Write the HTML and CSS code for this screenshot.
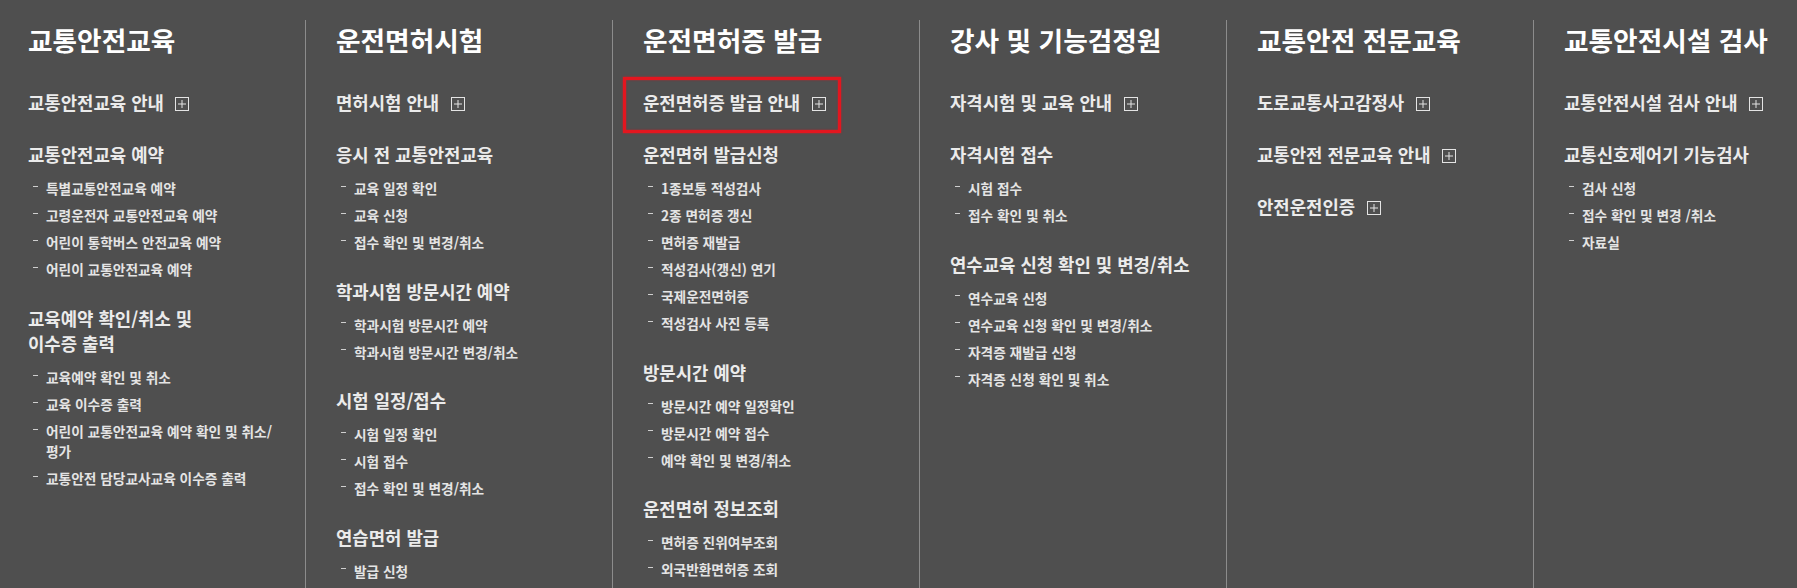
FILE: index.html
```html
<!DOCTYPE html>
<html lang="ko">
<head>
<meta charset="utf-8">
<title>사이트맵</title>
<link rel="stylesheet" href="styles.css">
</head>
<body>
<nav class="menu">
  <section class="col col-first">
    <h2 class="title">교통안전교육</h2>
    <div class="group"><h3 class="head">교통안전교육 안내<svg class="plus" viewBox="0 0 14 14" width="14" height="14"><rect x="0.5" y="0.5" width="13" height="13"/><path d="M3 7H11M7 3V11"/></svg></h3></div>
    <div class="group"><h3 class="head">교통안전교육 예약</h3>
      <ul class="items">
        <li>특별교통안전교육 예약</li>
        <li>고령운전자 교통안전교육 예약</li>
        <li>어린이 통학버스 안전교육 예약</li>
        <li>어린이 교통안전교육 예약</li>
      </ul>
    </div>
    <div class="group"><h3 class="head">교육예약 확인/취소 및<br>이수증 출력</h3>
      <ul class="items">
        <li>교육예약 확인 및 취소</li>
        <li>교육 이수증 출력</li>
        <li>어린이 교통안전교육 예약 확인 및 취소/<br>평가</li>
        <li>교통안전 담당교사교육 이수증 출력</li>
      </ul>
    </div>
  </section>
  <section class="col">
    <h2 class="title">운전면허시험</h2>
    <div class="group"><h3 class="head">면허시험 안내<svg class="plus" viewBox="0 0 14 14" width="14" height="14"><rect x="0.5" y="0.5" width="13" height="13"/><path d="M3 7H11M7 3V11"/></svg></h3></div>
    <div class="group"><h3 class="head">응시 전 교통안전교육</h3>
      <ul class="items">
        <li>교육 일정 확인</li>
        <li>교육 신청</li>
        <li>접수 확인 및 변경/취소</li>
      </ul>
    </div>
    <div class="group"><h3 class="head">학과시험 방문시간 예약</h3>
      <ul class="items">
        <li>학과시험 방문시간 예약</li>
        <li>학과시험 방문시간 변경/취소</li>
      </ul>
    </div>
    <div class="group"><h3 class="head">시험 일정/접수</h3>
      <ul class="items">
        <li>시험 일정 확인</li>
        <li>시험 접수</li>
        <li>접수 확인 및 변경/취소</li>
      </ul>
    </div>
    <div class="group"><h3 class="head">연습면허 발급</h3>
      <ul class="items">
        <li>발급 신청</li>
      </ul>
    </div>
  </section>
  <section class="col">
    <h2 class="title">운전면허증 발급</h2>
    <div class="group"><h3 class="head marked">운전면허증 발급 안내<svg class="plus" viewBox="0 0 14 14" width="14" height="14"><rect x="0.5" y="0.5" width="13" height="13"/><path d="M3 7H11M7 3V11"/></svg><span class="highlight"></span></h3></div>
    <div class="group"><h3 class="head">운전면허 발급신청</h3>
      <ul class="items">
        <li>1종보통 적성검사</li>
        <li>2종 면허증 갱신</li>
        <li>면허증 재발급</li>
        <li>적성검사(갱신) 연기</li>
        <li>국제운전면허증</li>
        <li>적성검사 사진 등록</li>
      </ul>
    </div>
    <div class="group"><h3 class="head">방문시간 예약</h3>
      <ul class="items">
        <li>방문시간 예약 일정확인</li>
        <li>방문시간 예약 접수</li>
        <li>예약 확인 및 변경/취소</li>
      </ul>
    </div>
    <div class="group"><h3 class="head">운전면허 정보조회</h3>
      <ul class="items">
        <li>면허증 진위여부조회</li>
        <li>외국반환면허증 조회</li>
      </ul>
    </div>
  </section>
  <section class="col">
    <h2 class="title">강사 및 기능검정원</h2>
    <div class="group"><h3 class="head">자격시험 및 교육 안내<svg class="plus" viewBox="0 0 14 14" width="14" height="14"><rect x="0.5" y="0.5" width="13" height="13"/><path d="M3 7H11M7 3V11"/></svg></h3></div>
    <div class="group"><h3 class="head">자격시험 접수</h3>
      <ul class="items">
        <li>시험 접수</li>
        <li>접수 확인 및 취소</li>
      </ul>
    </div>
    <div class="group"><h3 class="head">연수교육 신청 확인 및 변경/취소</h3>
      <ul class="items">
        <li>연수교육 신청</li>
        <li>연수교육 신청 확인 및 변경/취소</li>
        <li>자격증 재발급 신청</li>
        <li>자격증 신청 확인 및 취소</li>
      </ul>
    </div>
  </section>
  <section class="col">
    <h2 class="title">교통안전 전문교육</h2>
    <div class="group"><h3 class="head">도로교통사고감정사<svg class="plus" viewBox="0 0 14 14" width="14" height="14"><rect x="0.5" y="0.5" width="13" height="13"/><path d="M3 7H11M7 3V11"/></svg></h3></div>
    <div class="group"><h3 class="head">교통안전 전문교육 안내<svg class="plus" viewBox="0 0 14 14" width="14" height="14"><rect x="0.5" y="0.5" width="13" height="13"/><path d="M3 7H11M7 3V11"/></svg></h3></div>
    <div class="group"><h3 class="head">안전운전인증<svg class="plus" viewBox="0 0 14 14" width="14" height="14"><rect x="0.5" y="0.5" width="13" height="13"/><path d="M3 7H11M7 3V11"/></svg></h3></div>
  </section>
  <section class="col">
    <h2 class="title">교통안전시설 검사</h2>
    <div class="group"><h3 class="head">교통안전시설 검사 안내<svg class="plus" viewBox="0 0 14 14" width="14" height="14"><rect x="0.5" y="0.5" width="13" height="13"/><path d="M3 7H11M7 3V11"/></svg></h3></div>
    <div class="group"><h3 class="head">교통신호제어기 기능검사</h3>
      <ul class="items">
        <li>검사 신청</li>
        <li>접수 확인 및 변경 /취소</li>
        <li>자료실</li>
      </ul>
    </div>
  </section>
</nav>
</body>
</html>
```
FILE: styles.css
```css
html, body {
  margin: 0;
  padding: 0;
  height: 100%;
  overflow: hidden;
  background: #4f4f4f;
}

body {
  font-family: "Noto Sans CJK KR", "Noto Sans", sans-serif;
  color: #e8e8e8;
}

.menu {
  display: flex;
  height: 100vh;
  padding-top: 20px;
  box-sizing: border-box;
}

.col {
  flex: 0 0 307px;
  box-sizing: border-box;
  border-left: 1px solid #8c8c8c;
  padding: 2px 20px 0 30px;
}

.col-first {
  flex-basis: 305px;
  border-left: none;
  padding-left: 28px;
}

.title {
  margin: 0;
  font-size: 26.7px;
  line-height: 35px;
  font-weight: 700;
  color: #ffffff;
  white-space: nowrap;
}

.group {
  margin-top: 26.5px;
}

.title + .group {
  margin-top: 33px;
}

.head {
  position: relative;
  margin: 0;
  font-size: 17.8px;
  line-height: 25.5px;
  font-weight: 700;
  color: #ebebeb;
  white-space: nowrap;
}

.plus {
  display: inline-block;
  vertical-align: -1px;
  margin-left: 11.5px;
  fill: none;
  stroke: #e4e4e4;
  stroke-width: 1;
}

.items {
  list-style: none;
  display: flex;
  flex-direction: column;
  gap: 7px;
  margin: 10.5px 0 0;
  padding: 0 0 0 5px;
}

.items li {
  display: flex;
  font-size: 13.7px;
  line-height: 20px;
  font-weight: 700;
  color: #e4e4e4;
  white-space: nowrap;
}

.items li::before {
  content: "";
  flex: 0 0 5px;
  height: 1px;
  margin: 7.5px 8px 0 0;
  background: #cfcfcf;
}

.highlight {
  position: absolute;
  left: -20px;
  top: -13.5px;
  width: 218px;
  height: 56px;
  box-sizing: border-box;
  border: 3px solid #e3161f;
  box-shadow: 0 0 2px rgba(227, 22, 31, 0.8), inset 0 0 2px rgba(227, 22, 31, 0.8);
}
```
